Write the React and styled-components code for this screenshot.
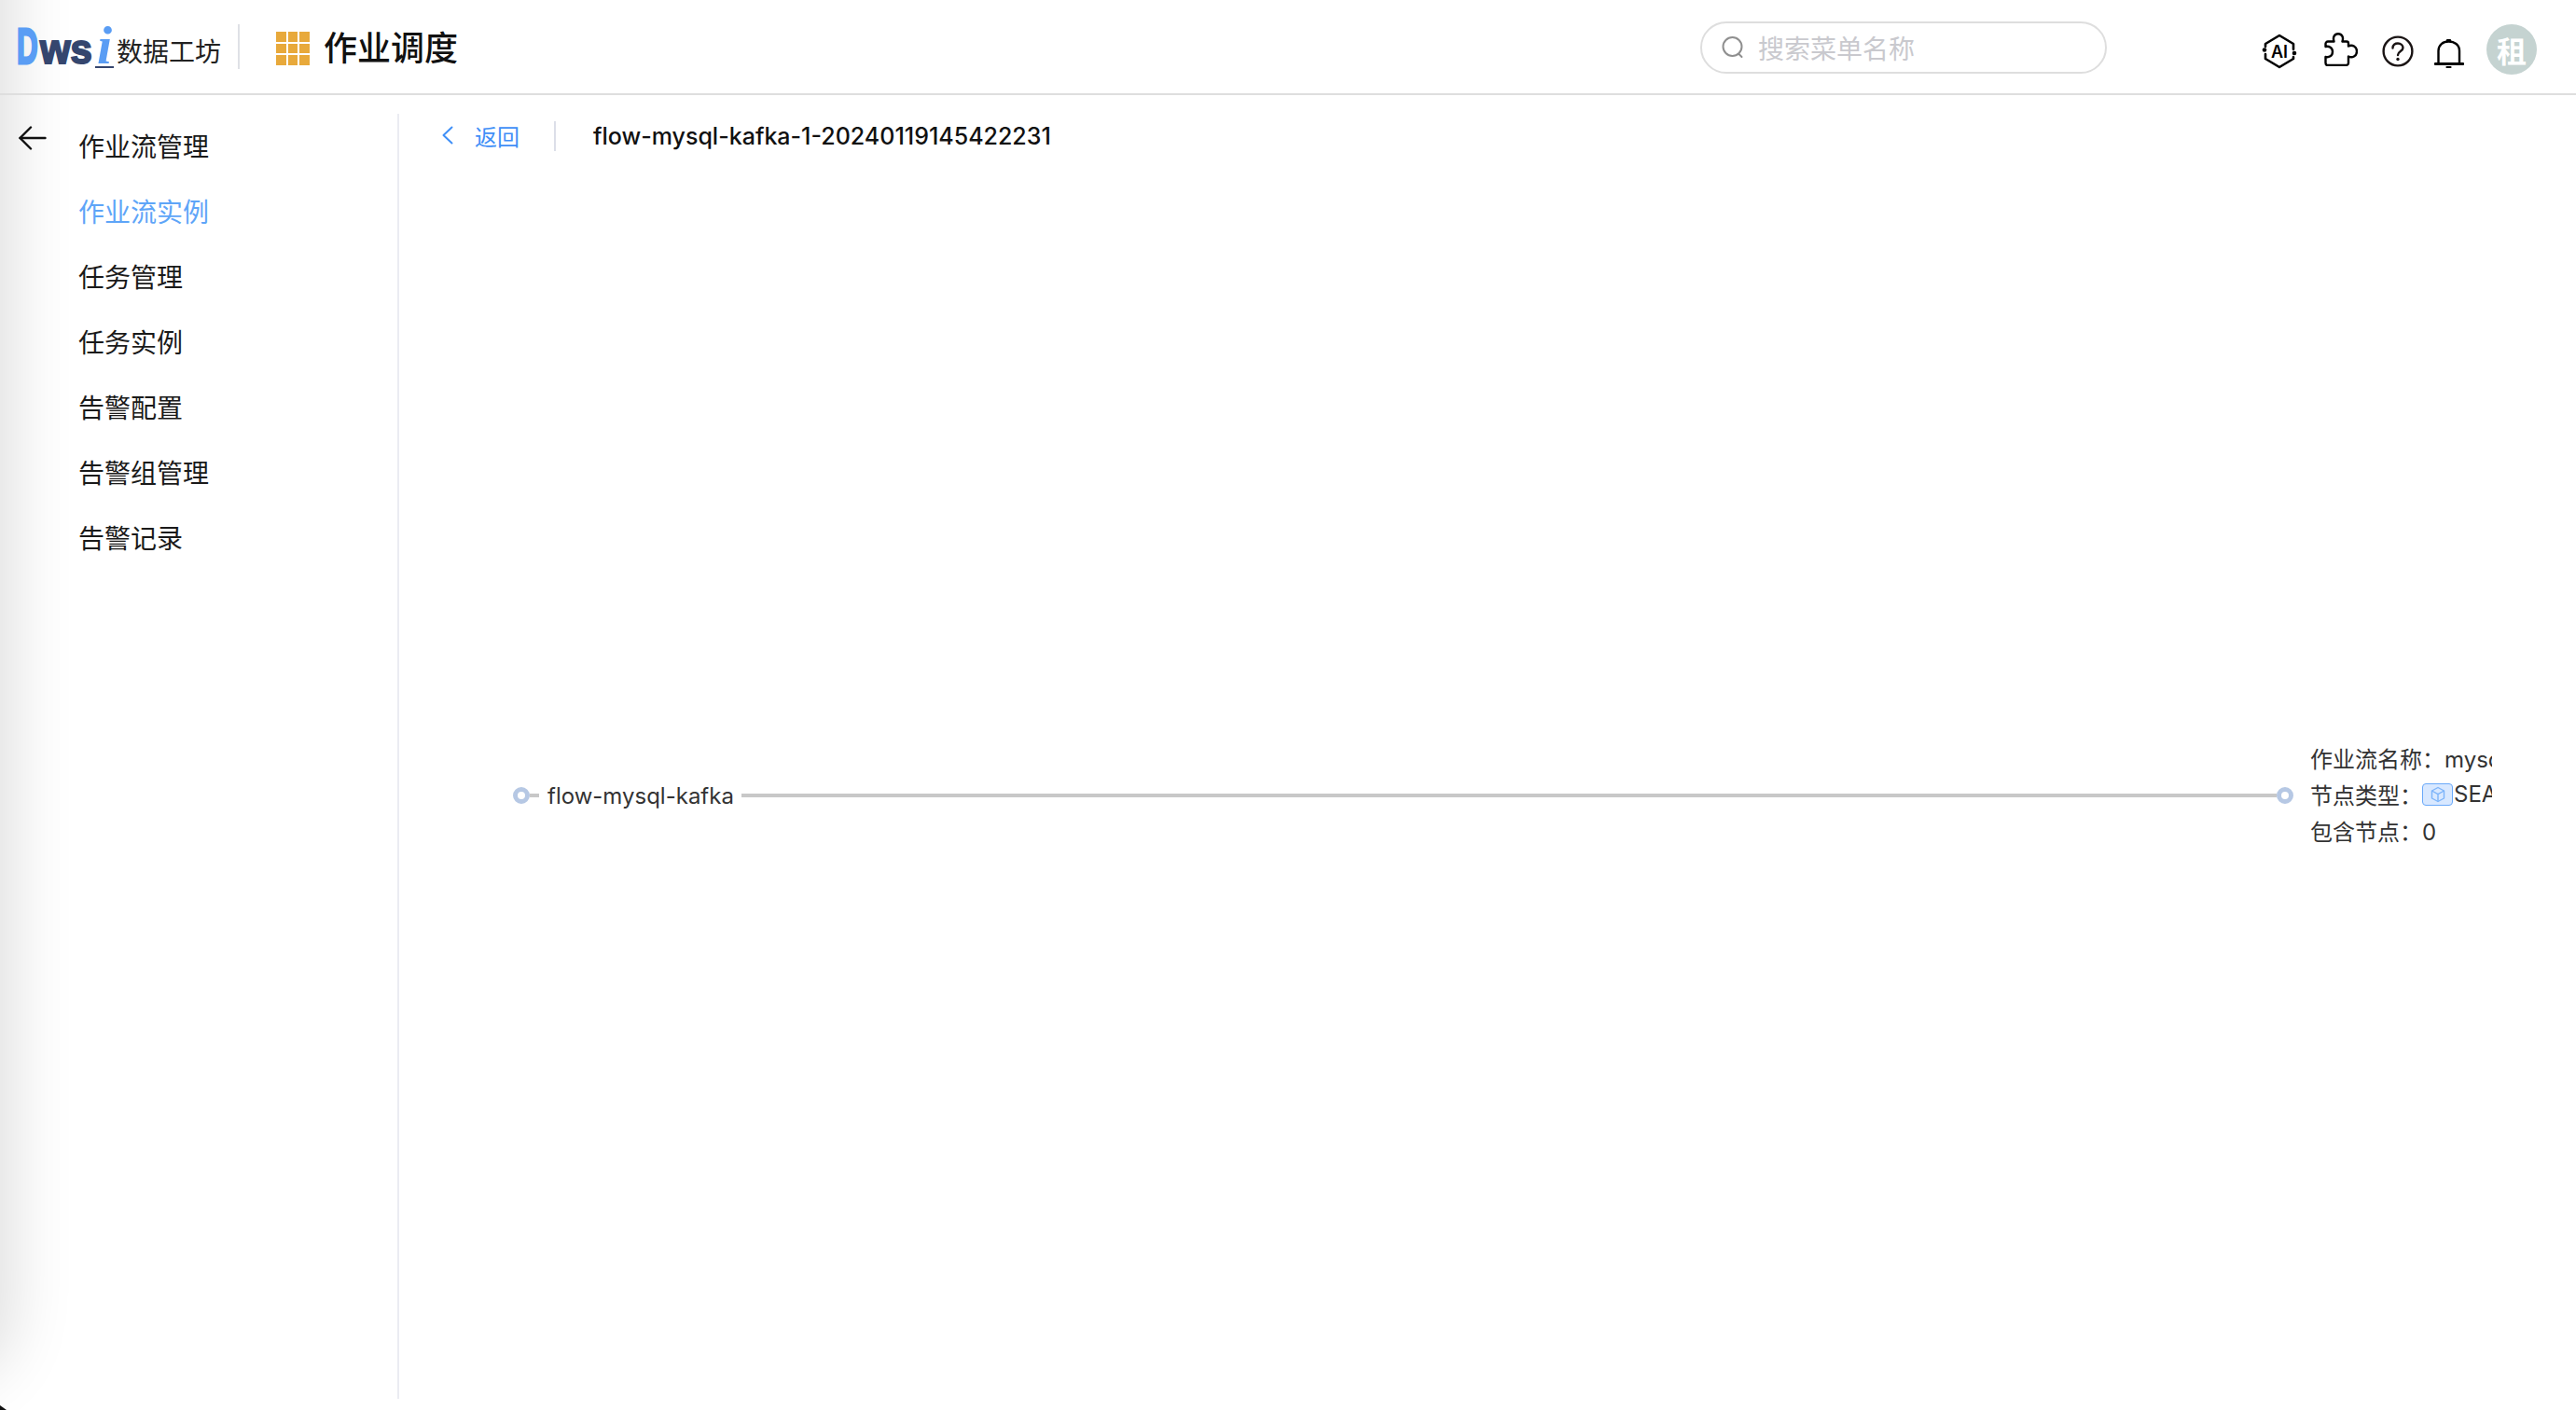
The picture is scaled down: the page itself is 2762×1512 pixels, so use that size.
import React from 'react'
import styled, { createGlobalStyle } from 'styled-components'

const menuItems = ['作业流管理', '作业流实例', '任务管理', '任务实例', '告警配置', '告警组管理', '告警记录']

const GlobalStyle = createGlobalStyle`
  html, body {
    margin: 0;
    padding: 0;
    background: #fff;
    overflow: hidden;
  }
  body {
    font-family: Inter, "Noto Sans CJK SC", sans-serif;
    color: #111;
  }
`

function AiIcon() {
  return (
    <svg width="38" height="38" viewBox="0 0 38 38" fill="none" stroke="#000" strokeWidth="2.6" strokeLinecap="round" strokeLinejoin="round">
      <path d="M4 14 L4 11 L19 2 L34 11 L34 17" />
      <path d="M4 22 L4 27 L19 36 L34 27 L34 25" />
      <circle cx="3" cy="17.5" r="2.3" fill="#000" stroke="none" />
      <circle cx="35" cy="21" r="2.3" fill="#000" stroke="none" />
      <text x="19" y="25.5" textAnchor="middle" fontFamily="Inter, sans-serif" fontSize="18" fontWeight="600" fill="#000" stroke="none">AI</text>
    </svg>
  )
}

function PuzzleIcon() {
  return (
    <svg width="36" height="36" viewBox="0 0 36 36" fill="none" stroke="#000" strokeWidth="2.4" strokeLinecap="round" strokeLinejoin="round">
      <path d="M4 9.5 H10.5 C9 5 11 1.2 15 1.2 C19 1.2 21 5 19.5 9.5 H24 A2 2 0 0 1 26 11.5 V14.5 C30 12.5 35 14.5 35 20 C35 25.5 30 27.5 26 25.5 V32.5 A2.5 2.5 0 0 1 23.5 35 H4 A2.5 2.5 0 0 1 1.5 32.5 V26 C5 27 9 25 9 20.5 C9 16 5 14 1.5 15 V12 A2.5 2.5 0 0 1 4 9.5 Z" />
    </svg>
  )
}

function HelpIcon() {
  return (
    <svg width="34" height="34" viewBox="0 0 34 34" fill="none" stroke="#1a1414" strokeWidth="2.4" strokeLinecap="round">
      <circle cx="17" cy="17" r="15.4" />
      <path d="M11.5 13.5 C11.5 10 14 8.5 17 8.5 C20 8.5 22.5 10.5 22.5 13.2 C22.5 17 17 17 17 21" />
      <circle cx="17" cy="25.5" r="1.7" fill="#1a1414" stroke="none" />
    </svg>
  )
}

function BellIcon() {
  return (
    <svg width="32" height="32" viewBox="0 0 32 32" fill="none" stroke="#000" strokeWidth="2.4" strokeLinecap="round" strokeLinejoin="round">
      <path d="M4.5 26 V12.5 C4.5 6 9.5 2.5 15.5 2.5 C21.5 2.5 27 6 27 12.5 V26" />
      <path d="M1 26.5 H31" strokeWidth="2.8" />
      <path d="M14 1.2 H17" />
      <path d="M13.5 30 H17.5" strokeWidth="2.2" />
    </svg>
  )
}

function App() {
  return (
    <Page>
      <GlobalStyle />
      <EdgeShade />
      <WindowCorner />
      <Header>
        <Logo>
          <LogoD>D</LogoD>
          <LogoWs>ws</LogoWs>
          <LogoI>i</LogoI>
          <LogoName>数据工坊</LogoName>
        </Logo>
        <HeaderDivider />
        <AppGrid>
          {Array.from({ length: 9 }).map((_, i) => (
            <span key={i} />
          ))}
        </AppGrid>
        <AppTitle>作业调度</AppTitle>
        <Search>
          <svg width="26" height="26" viewBox="0 0 26 26" fill="none" stroke="#8f8f8f" strokeWidth="2" strokeLinecap="round">
            <circle cx="12.5" cy="12" r="10" />
            <path d="M19.5 20 L22.5 23" />
          </svg>
          <SearchHint>搜索菜单名称</SearchHint>
        </Search>
        <Actions>
          <ActionSlot $left={0} $down={10}><AiIcon /></ActionSlot>
          <ActionSlot $left={29} $down={9}><PuzzleIcon /></ActionSlot>
          <ActionSlot $left={26} $down={12}><HelpIcon /></ActionSlot>
          <ActionSlot $left={22} $down={16}><BellIcon /></ActionSlot>
          <Avatar>租</Avatar>
        </Actions>
      </Header>
      <Body>
        <Sidebar>
          <BackArrow>
            <svg width="30" height="26" viewBox="0 0 30 26" fill="none" stroke="#111" strokeWidth="2.4" strokeLinecap="round" strokeLinejoin="round">
              <path d="M1.5 13 H28.5" />
              <path d="M13 1.5 L1.5 13 L13 24.5" />
            </svg>
          </BackArrow>
          <Menu>
            {menuItems.map((item) => (
              <MenuItem key={item} $active={item === '作业流实例'}>
                {item}
              </MenuItem>
            ))}
          </Menu>
        </Sidebar>
        <Main>
          <TopBar>
            <BackLink>
              <svg width="12" height="20" viewBox="0 0 12 20" fill="none" stroke="#3f8ff7" strokeWidth="2" strokeLinecap="round" strokeLinejoin="round">
                <path d="M10.5 1.5 L1.5 10 L10.5 18.5" />
              </svg>
              <span>返回</span>
            </BackLink>
            <TopDivider />
            <InstanceName>flow-mysql-kafka-1-20240119145422231</InstanceName>
          </TopBar>
          <Canvas>
            <FlowRow>
              <Port />
              <Stub />
              <NodeLabel>flow-mysql-kafka</NodeLabel>
              <Edge />
              <Port />
              <NodeInfo>
                <InfoLine>作业流名称：mysql-kafka</InfoLine>
                <InfoLine>
                  节点类型：
                  <TypeBadge>
                    <svg width="18" height="18" viewBox="0 0 18 18" fill="none" stroke="#7cb4fa" strokeWidth="1.4" strokeLinejoin="round">
                      <path d="M9 1.5 L15.5 5 V13 L9 16.5 L2.5 13 V5 Z" />
                      <path d="M2.5 5 L9 8.7 L15.5 5 M9 8.7 V16.5" />
                    </svg>
                  </TypeBadge>
                  SEATUNNEL
                </InfoLine>
                <InfoLine>包含节点：0</InfoLine>
              </NodeInfo>
            </FlowRow>
          </Canvas>
        </Main>
      </Body>
    </Page>
  )
}

export default App

const Page = styled.div`
  position: relative;
  width: 2762px;
  height: 1512px;
  overflow: hidden;
  background: #fff;
`

/* soft shade coming in from the left window edge, it fades out near the bottom */
const EdgeShade = styled.div`
  position: absolute;
  left: -80px;
  top: -120px;
  width: 80px;
  height: 1590px;
  border-radius: 0 0 60px 0;
  box-shadow: 0 0 70px 10px rgba(0, 0, 0, 0.14);
  pointer-events: none;
`

const WindowCorner = styled.div`
  position: absolute;
  left: 0;
  bottom: 0;
  width: 7px;
  height: 5px;
  background: #111;
  clip-path: polygon(0 0, 100% 100%, 0 100%);
`

const Header = styled.header`
  position: relative;
  display: flex;
  align-items: center;
  height: 100px;
  padding-left: 18px;
  border-bottom: 2px solid #dedede;
`

const Logo = styled.div`
  display: flex;
  align-items: baseline;
  width: 219px;
  height: 50px;
  padding-top: 2px;
  box-sizing: border-box;
`

const LogoD = styled.span`
  display: inline-block;
  width: 25px;
  font-family: "Liberation Sans", sans-serif;
  font-weight: 700;
  font-size: 54px;
  line-height: 44px;
  color: #5a9df4;
  -webkit-text-stroke: 3px #5a9df4;
  transform: scaleX(0.58);
  transform-origin: left bottom;
`

const LogoWs = styled.span`
  display: inline-block;
  width: 59px;
  font-family: "Liberation Sans", sans-serif;
  font-weight: 700;
  font-size: 44px;
  line-height: 44px;
  color: #35466e;
  -webkit-text-stroke: 2px #35466e;
  transform: scaleX(0.95);
  transform-origin: left bottom;
`

const LogoI = styled.span`
  display: inline-block;
  width: 20px;
  font-family: "Liberation Serif", serif;
  font-style: italic;
  font-weight: 700;
  font-size: 58px;
  line-height: 44px;
  text-align: center;
  color: #5a9df4;
  border-bottom: 2px solid #35466e;
`

const LogoName = styled.span`
  margin-left: 3px;
  font-family: "Noto Sans CJK SC", sans-serif;
  font-size: 28px;
  line-height: 38px;
  color: #222;
  white-space: nowrap;
  transform: translateY(-2px);
`

const HeaderDivider = styled.div`
  width: 2px;
  height: 48px;
  margin-left: 18px;
  background: #dfe1e6;
`

const AppGrid = styled.div`
  display: grid;
  grid-template-columns: repeat(3, 1fr);
  grid-template-rows: repeat(3, 1fr);
  gap: 2px;
  width: 36px;
  height: 36px;
  margin-left: 39px;
  margin-top: 4px;

  span {
    background: #e8a93b;
  }
`

const AppTitle = styled.h1`
  margin: 0 0 2px 15px;
  font-family: "Noto Sans CJK SC", sans-serif;
  font-size: 36px;
  font-weight: 500;
  line-height: 44px;
  color: #111;
`

const Search = styled.div`
  display: flex;
  align-items: center;
  gap: 14px;
  box-sizing: border-box;
  width: 436px;
  height: 56px;
  margin: 2px 0 0 auto;
  padding-left: 20px;
  border: 2px solid #dedede;
  border-radius: 28px;
`

const SearchHint = styled.span`
  font-family: "Noto Sans CJK SC", sans-serif;
  font-size: 28px;
  color: #c9c9ce;
`

const Actions = styled.div`
  display: flex;
  align-items: flex-start;
  height: 54px;
  margin: 6px 42px 0 166px;
`

const ActionSlot = styled.div`
  flex: none;
  line-height: 0;
  margin-left: ${(props) => props.$left}px;
  margin-top: ${(props) => props.$down}px;
`

const Avatar = styled.div`
  display: flex;
  align-items: center;
  justify-content: center;
  width: 54px;
  height: 54px;
  margin-left: 24px;
  border-radius: 50%;
  background: #c5d3d1;
  color: #fff;
  font-family: "Noto Sans CJK SC", sans-serif;
  font-size: 32px;
  font-weight: 700;
`

const Body = styled.div`
  display: flex;
  height: 1410px;
`

const Sidebar = styled.aside`
  display: flex;
  box-sizing: border-box;
  width: 428px;
  height: 1378px;
  margin-top: 20px;
  padding-left: 20px;
  border-right: 2px solid #ebecf2;
`

const BackArrow = styled.div`
  width: 30px;
  padding-top: 13px;
`

const Menu = styled.nav`
  display: flex;
  flex-direction: column;
  margin-left: 34px;
  margin-top: -1px;
`

const MenuItem = styled.div`
  height: 70px;
  font-family: "Noto Sans CJK SC", sans-serif;
  font-size: 28px;
  line-height: 70px;
  color: ${(props) => (props.$active ? '#5ea5f8' : '#1a1a1a')};
`

const Main = styled.main`
  flex: 1;
  min-width: 0;
  margin-top: 20px;
`

const TopBar = styled.div`
  display: flex;
  align-items: center;
  height: 48px;
  padding-left: 46px;
`

const BackLink = styled.div`
  display: flex;
  align-items: center;
  gap: 23px;
  margin-top: -2px;
  font-family: "Noto Sans CJK SC", sans-serif;
  font-size: 24px;
  color: #3f8ff7;
`

const TopDivider = styled.div`
  width: 2px;
  height: 32px;
  margin-left: 37px;
  background: #dcdfe8;
`

const InstanceName = styled.div`
  margin-left: 40px;
  font-size: 25px;
  font-weight: 500;
  color: #111;
`

const Canvas = styled.div`
  padding: 625px 90px 0 122px;
`

const FlowRow = styled.div`
  display: flex;
  align-items: center;
  height: 116px;
`

const Port = styled.div`
  flex: none;
  box-sizing: border-box;
  width: 18px;
  height: 18px;
  border: 5px solid #b6c8e4;
  border-radius: 50%;
  background: #fff;
`

const Stub = styled.div`
  width: 10px;
  height: 4px;
  background: #c8c8c8;
`

const NodeLabel = styled.div`
  margin: 0 8px 0 9px;
  font-size: 24px;
  color: #333;
`

const Edge = styled.div`
  flex: 1;
  height: 4px;
  background: #c8c8c8;
`

const NodeInfo = styled.div`
  flex: none;
  display: flex;
  flex-direction: column;
  width: 195px;
  margin-left: 18px;
  margin-top: -3px;
  overflow: hidden;
`

const InfoLine = styled.div`
  display: flex;
  align-items: center;
  height: 39px;
  font-size: 24px;
  color: #333;
  white-space: nowrap;
`

const TypeBadge = styled.span`
  display: inline-flex;
  align-items: center;
  justify-content: center;
  flex: none;
  box-sizing: border-box;
  width: 33px;
  height: 24px;
  margin-right: 1px;
  border: 1px solid #6aa9f9;
  border-radius: 4px;
  background: #d8e8ff;
`
